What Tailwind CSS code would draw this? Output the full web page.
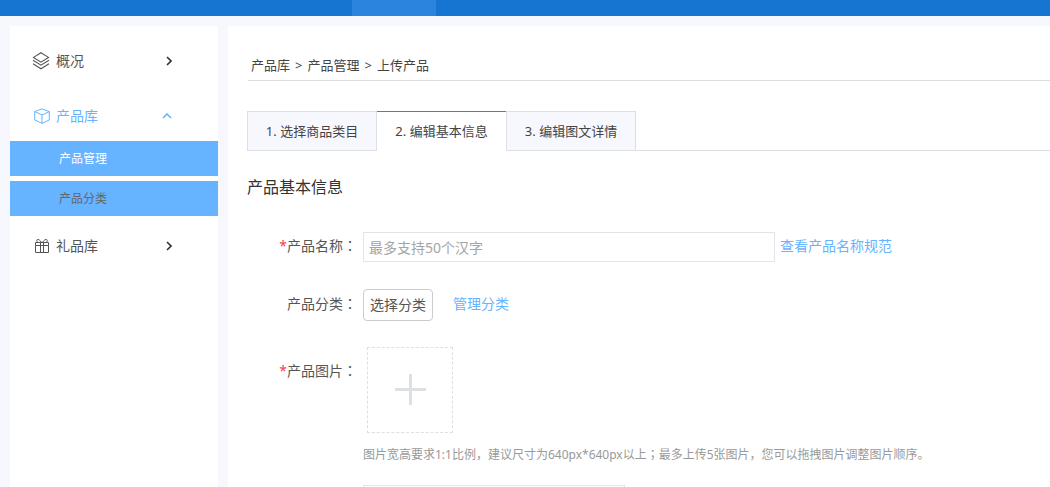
<!DOCTYPE html>
<html lang="zh-CN">
<head>
<meta charset="utf-8">
<meta name="viewport" content="width=device-width, initial-scale=1">
<title>上传产品</title>
<script src="https://cdn.jsdelivr.net/npm/@tailwindcss/browser@4"></script>
</head>
<body class="flex h-screen flex-col overflow-hidden bg-[#f6f8fd] font-['Noto_Sans','Noto_Sans_CJK_SC',sans-serif] text-sm text-[#555]">
<header class="flex h-4 shrink-0 bg-[#1775d2] pl-[352px]">
  <div class="w-[84px] bg-[#2b85df]"></div>
</header>
<div class="flex min-h-0 flex-1 gap-[10px] pt-[10px] pl-[10px]">
  <nav class="flex w-[208px] shrink-0 flex-col gap-[5px] bg-white pt-[10px]">
    <a href="#" class="flex h-[50px] items-center pr-[46px] pl-[22px]">
      <svg class="mr-[6px] h-[18px] w-[18px]" viewBox="0 0 18 18" fill="none" stroke="#555" stroke-width="1.1"><path d="M9 .7 16.500 5.400 9 10.100 1.500 5.400Z"/><path d="M1 8.200 9 13.200l8-5M1 11.800l8 5 8-5"/></svg>
      <span class="flex-1">概况</span>
      <svg class="h-[10px] w-[6px]" viewBox="0 0 6 10" fill="none" stroke="#333" stroke-width="1.6"><path d="m1 1 4 4-4 4"/></svg>
    </a>
    <div class="flex flex-col">
      <a href="#" class="flex h-[50px] items-center pr-[46px] pl-[24px] text-[#66b3ff]">
        <svg class="mr-[6px] h-4 w-4" viewBox="0 0 16 16" fill="none" stroke="#66b3ff" stroke-width="1"><path d="M8 .8 15.3 3.6V12L8 15.3.7 12V3.6ZM.7 3.6 8 7l7.3-3.4M8 7v8.3"/></svg>
        <span class="flex-1">产品库</span>
        <svg class="h-[6px] w-[10px]" viewBox="0 0 10 6" fill="none" stroke="#66b3ff" stroke-width="1.6"><path d="m1 5 4-4 4 4"/></svg>
      </a>
      <div class="flex flex-col gap-[5px]">
        <a href="#" class="flex h-[35px] items-center bg-[#66b3ff] pl-[49px] text-xs text-white">产品管理</a>
        <a href="#" class="flex h-[35px] items-center bg-[#66b3ff] pl-[49px] text-xs text-[#666]">产品分类</a>
      </div>
    </div>
    <a href="#" class="flex h-[50px] items-center pr-[46px] pl-[24px]">
      <svg class="mr-[6px] h-4 w-4" viewBox="0 0 16 16" fill="none" stroke="#555" stroke-width="1"><path d="M1.500 4.500h13v3h-13ZM1.500 7.500v7h13v-7M6.500 4.500v10M9.500 4.500v10M7.500 4.500C6 1.500 3 .5 2.700 2.500c-.1 1 .6 1.700 1.600 2M8.500 4.500c1.500-3 4.500-4 4.800-2 .1 1-.6 1.700-1.600 2"/></svg>
      <span class="flex-1">礼品库</span>
      <svg class="h-[10px] w-[6px]" viewBox="0 0 6 10" fill="none" stroke="#333" stroke-width="1.6"><path d="m1 1 4 4-4 4"/></svg>
    </a>
  </nav>
  <main class="min-w-0 flex-1 overflow-hidden bg-white pl-[19px]">
    <nav class="ml-px flex h-[55px] items-end gap-[5px] border-b border-[#ddd] pb-[5px] pl-[3px] text-[13px] leading-5 text-[#444]">
      <a href="#">产品库</a><span>&gt;</span><a href="#">产品管理</a><span>&gt;</span><span>上传产品</span>
    </nav>
    <div class="mt-[30px] flex h-10 text-[13px] text-[#444]">
      <button type="button" class="w-[130px] border border-[#dcdfe3] bg-[#f6f8fd]">1. 选择商品类目</button>
      <button type="button" class="w-[129px] border-t border-[#6f7780] bg-white">2. 编辑基本信息</button>
      <button type="button" class="w-[130px] border border-[#dcdfe3] bg-[#f6f8fd]">3. 编辑图文详情</button>
      <div class="flex-1 border-b border-[#dcdfe3]"></div>
    </div>
    <h1 class="mt-6 text-base leading-6 text-[#333]">产品基本信息</h1>
    <form class="mt-[33px]">
      <div class="flex h-[30px] items-center">
        <label for="name" class="mr-[6px] w-[110px] pb-[3px] text-right leading-5"><span class="text-[#f04050]">*</span>产品名称<span class="font-['Noto_Sans_CJK_TC']" lang="zh-TW">：</span></label>
        <input id="name" type="text" placeholder="最多支持50个汉字" class="h-[30px] w-[412px] border border-[#e2e4e8] px-[5px] outline-none placeholder:text-[#a5a5a5]">
        <a href="#" class="ml-[5px] pb-[2px] leading-5 text-[#66b3ff]">查看产品名称规范</a>
      </div>
      <div class="mt-[27px] flex h-8 items-center">
        <label for="category" class="mr-[6px] w-[110px] pb-[3px] text-right leading-5">产品分类<span class="font-['Noto_Sans_CJK_TC']" lang="zh-TW">：</span></label>
        <button id="category" type="button" class="h-8 w-[70px] rounded border border-[#ccc] bg-white">选择分类</button>
        <a href="#" class="ml-5 pb-[2px] leading-5 text-[#66b3ff]">管理分类</a>
      </div>
      <div class="mt-[26px] flex items-start">
        <label for="upload" class="mt-[13px] mr-[6px] w-[110px] text-right leading-5"><span class="text-[#f04050]">*</span>产品图片<span class="font-['Noto_Sans_CJK_TC']" lang="zh-TW">：</span></label>
        <div>
          <button id="upload" type="button" aria-label="添加图片" class="ml-1 flex h-[86px] w-[86px] items-center justify-center border border-dashed border-[#dcdfe3]">
            <svg class="mb-px h-[31px] w-[31px]" viewBox="0 0 31 31" fill="#dcdfe3"><path d="M14 0h3v14h14v3H17v14h-3V17H0v-3h14Z"/></svg>
          </button>
          <p class="mt-[11px] text-xs leading-5 text-[#999]">图片宽高要求1:1比例，建议尺寸为640px*640px以上<span class="font-['Noto_Sans_CJK_TC']" lang="zh-TW">；</span>最多上传5张图片，您可以拖拽图片调整图片顺序。</p>
          <input type="text" aria-label="产品信息" class="mt-5 h-[30px] w-[262px] border border-[#e2e4e8] px-[5px] outline-none">
        </div>
      </div>
    </form>
  </main>
</div>
</body>
</html>
